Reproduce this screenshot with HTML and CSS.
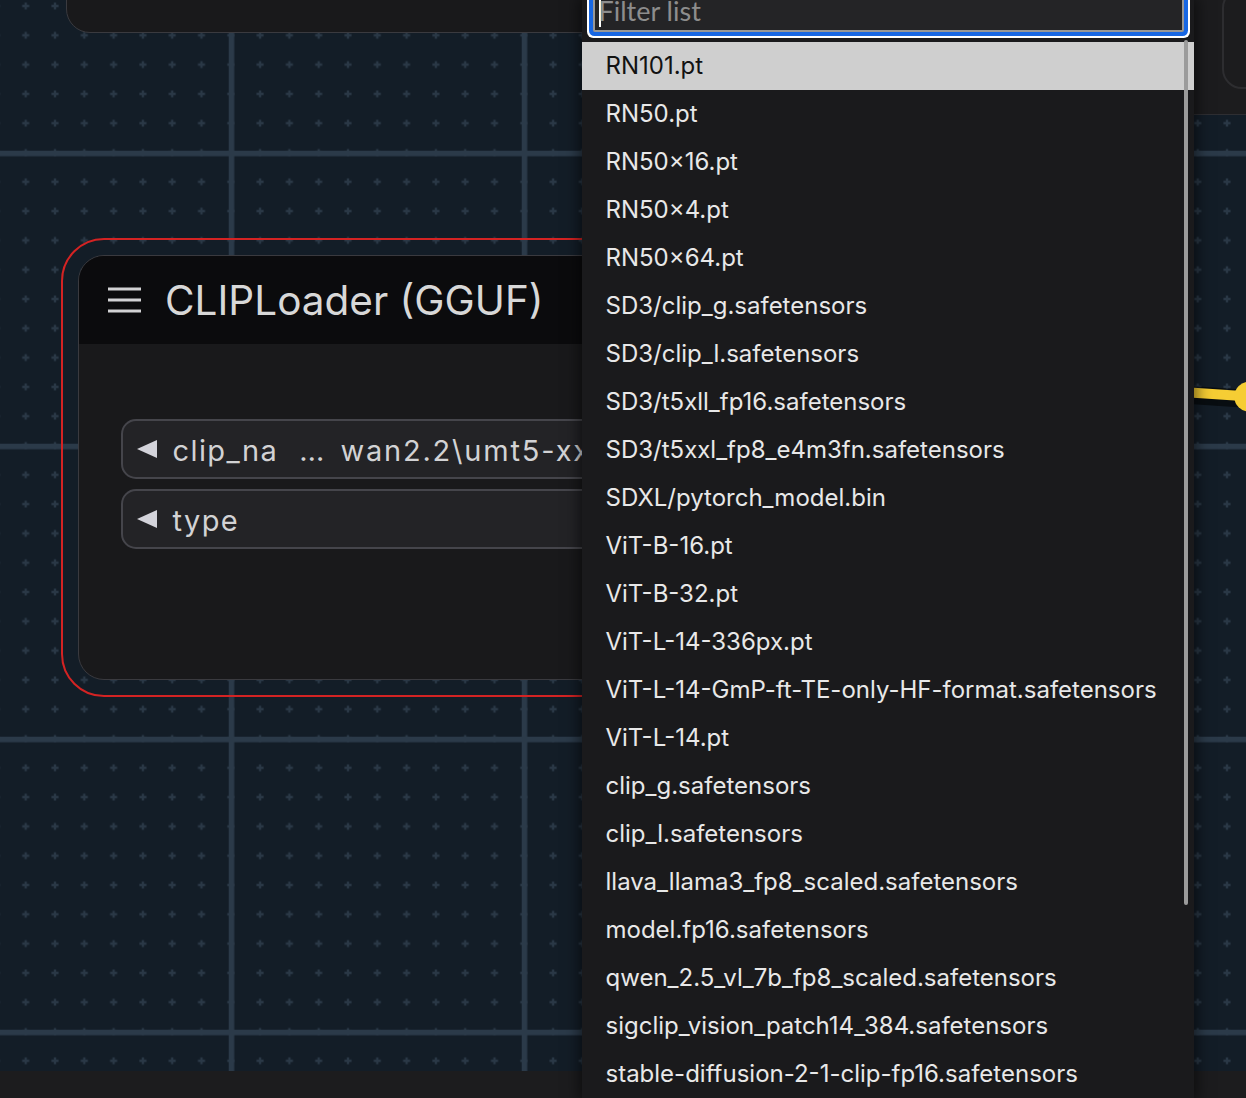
FILE: index.html
```html
<!DOCTYPE html>
<html lang="en">
<head>
<meta charset="utf-8">
<title>CLIPLoader (GGUF)</title>
<link rel="stylesheet" href="styles.css">
</head>
<body>
<div class="app">
  <div class="canvas">
    <svg class="grid" width="1246" height="1071" viewBox="0 0 1246 1071" aria-hidden="true">
      <defs>
        <pattern id="minor" patternUnits="userSpaceOnUse" width="29.3" height="29.3" x="216.15" y="137.85">
          <path d="M11.15 13.5h7v2.3h-7z M13.5 11.15h2.3v7h-2.3z" fill="#2a3846"/>
        </pattern>
        <pattern id="major" patternUnits="userSpaceOnUse" width="293" height="293" x="228.75" y="150.75">
          <rect x="0" y="0" width="5.5" height="293" fill="#2b3a49"/>
          <rect x="0" y="0" width="293" height="5.5" fill="#2b3a49"/>
        </pattern>
      </defs>
      <rect width="1246" height="1071" fill="#131d27"/>
      <rect width="1246" height="1071" fill="url(#minor)"/>
      <rect width="1246" height="1071" fill="url(#major)"/>
    </svg>

    <div class="node node-top"></div>

    <div class="node node-right">
      <div class="node-right-widget"></div>
    </div>

    <div class="node node-clip">
      <div class="node-title">
        <svg class="menu-icon" width="33" height="28" viewBox="0 0 33 28" aria-hidden="true">
          <rect x="0" y="1.5" width="33" height="3" fill="#d2d2d4"/>
          <rect x="0" y="12.5" width="33" height="3" fill="#d2d2d4"/>
          <rect x="0" y="23.5" width="33" height="3" fill="#d2d2d4"/>
        </svg>
        <span class="node-title-text">CLIPLoader (GGUF)</span>
      </div>
      <div class="node-body">
        <div class="widget">
          <svg class="arrow" width="20" height="18" viewBox="0 0 20 18" aria-hidden="true">
            <polygon points="0,9 20,0 20,18" fill="#d3d3da"/>
          </svg>
          <span class="w-label">clip_na</span>
          <span class="w-ellipsis">…</span>
          <span class="w-value">wan2.2\umt5-xxl_fp8_e4m3fn_scaled.safetensors</span>
        </div>
        <div class="widget">
          <svg class="arrow" width="20" height="18" viewBox="0 0 20 18" aria-hidden="true">
            <polygon points="0,9 20,0 20,18" fill="#d3d3da"/>
          </svg>
          <span class="w-label">type</span>
        </div>
      </div>
    </div>

    <svg class="link" width="110" height="70" viewBox="0 0 110 70" aria-hidden="true">
      <path d="M40 35 L92 38.5" stroke="#000" stroke-opacity="0.55" stroke-width="18" fill="none"/>
      <path d="M40 32.5 L92 36" stroke="#f6cd34" stroke-width="10" fill="none"/>
      <circle cx="99.3" cy="36.7" r="15" fill="#f6cd34"/>
    </svg>
  </div>

  <div class="statusbar"></div>

  <div class="dropdown">
    <div class="filter-row">
      <div class="filter"><span class="caret"></span><span class="placeholder">Filter list</span></div>
    </div>
    <div class="list">
      <div class="item active">RN101.pt</div>
      <div class="item">RN50.pt</div>
      <div class="item">RN50×16.pt</div>
      <div class="item">RN50×4.pt</div>
      <div class="item">RN50×64.pt</div>
      <div class="item">SD3/clip_g.safetensors</div>
      <div class="item">SD3/clip_l.safetensors</div>
      <div class="item">SD3/t5xll_fp16.safetensors</div>
      <div class="item">SD3/t5xxl_fp8_e4m3fn.safetensors</div>
      <div class="item">SDXL/pytorch_model.bin</div>
      <div class="item">ViT-B-16.pt</div>
      <div class="item">ViT-B-32.pt</div>
      <div class="item">ViT-L-14-336px.pt</div>
      <div class="item">ViT-L-14-GmP-ft-TE-only-HF-format.safetensors</div>
      <div class="item">ViT-L-14.pt</div>
      <div class="item">clip_g.safetensors</div>
      <div class="item">clip_l.safetensors</div>
      <div class="item">llava_llama3_fp8_scaled.safetensors</div>
      <div class="item">model.fp16.safetensors</div>
      <div class="item">qwen_2.5_vl_7b_fp8_scaled.safetensors</div>
      <div class="item">sigclip_vision_patch14_384.safetensors</div>
      <div class="item">stable-diffusion-2-1-clip-fp16.safetensors</div>
    </div>
    <div class="scroll-thumb"></div>
  </div>
</div>
</body>
</html>
```

FILE: styles.css
```css
html, body {
  margin: 0;
  padding: 0;
  background: #131d27;
}

body {
  width: 1246px;
  height: 1098px;
  overflow: hidden;
  font-family: Inter, "Noto Sans", sans-serif;
}

.app {
  position: relative;
  width: 1246px;
  height: 1098px;
  display: grid;
  grid-template-rows: 1071px 27px;
}

.canvas {
  position: relative;
  overflow: hidden;
  background: #131d27;
}

.grid {
  display: block;
}

/* ---------- nodes on the canvas ---------- */
.node {
  position: absolute;
  box-sizing: border-box;
  background: #19191b;
  border: 1.5px solid #3a3a3f;
}

.node-top {
  left: 66px;
  top: -100px;
  width: 700px;
  height: 133px;
  border-radius: 24px;
}

.node-right {
  left: 1100px;
  top: -100px;
  width: 220px;
  height: 215px;
  border-radius: 24px;
  background: #1c1c1e;
  border-color: #2e2e32;
}

.node-right-widget {
  box-sizing: border-box;
  margin-left: 121px;
  margin-top: 87px;
  width: 120px;
  height: 101px;
  border: 2px solid #2d2d30;
  border-radius: 20px;
}

.node-clip {
  left: 78px;
  top: 255px;
  width: 600px;
  height: 425px;
  border-radius: 26px;
  overflow: hidden;
  outline: 2.5px solid #d42323;
  outline-offset: 15px;
}

.node-title {
  height: 88px;
  background: #0b0b0d;
  display: flex;
  align-items: center;
  padding-left: 28.5px;
  gap: 24.5px;
}

.menu-icon {
  flex: none;
  display: block;
}

.node-title-text {
  font-size: 40.5px;
  color: #d8d8d8;
  white-space: nowrap;
  line-height: 1;
  margin-top: 3px;
}

.node-body {
  padding: 75px 0 0 42px;
  display: flex;
  flex-direction: column;
  gap: 10px;
}

.widget {
  box-sizing: border-box;
  height: 60px;
  width: 620px;
  background: #232326;
  border: 2px solid #45454b;
  border-radius: 15px;
  display: flex;
  align-items: center;
  padding-left: 14px;
  padding-top: 2px;
  font-size: 29px;
  color: #d2d2d4;
  white-space: nowrap;
  overflow: hidden;
}

.arrow {
  flex: none;
  display: block;
  margin-right: 15.5px;
  margin-top: -2px;
}

.w-label {
  letter-spacing: 1.4px;
}

.w-ellipsis {
  margin-left: 21px;
  letter-spacing: 0;
}

.w-value {
  margin-left: 16px;
  letter-spacing: 1.8px;
}

.link {
  position: absolute;
  left: 1150px;
  top: 360px;
}

/* ---------- bottom bar ---------- */
.statusbar {
  background: #1c1c1e;
}

/* ---------- dropdown menu ---------- */
.dropdown {
  position: absolute;
  left: 582px;
  top: 0;
  width: 612px;
  height: 1098px;
  background: #1a1a1c;
  box-shadow: 0 0 14px 3px rgba(0, 0, 0, 0.55);
  overflow: hidden;
}

.filter-row {
  display: flex;
  flex-direction: column;
  height: 42px;
  box-sizing: border-box;
  padding: 0 10px 0 10.5px;
}

.filter {
  flex: none;
  margin-top: -12px;
  height: 44px;
  box-sizing: border-box;
  border: 2px solid #979797;
  border-radius: 2px;
  background: #242426;
  box-shadow: 0 0 0 4px #1767e4, 0 0 0 6px #ffffff;
  padding: 1px 4px 0;
  font-family: Lato, "Open Sans", sans-serif;
  font-size: 27px;
  line-height: 39px;
  color: #8d8d8d;
  white-space: nowrap;
  overflow: hidden;
}

.caret {
  display: inline-block;
  width: 2px;
  height: 32px;
  background: #ffffff;
  vertical-align: -6px;
  margin-right: -2px;
}

.list {
  display: flex;
  flex-direction: column;
}

.item {
  height: 48px;
  box-sizing: border-box;
  padding-left: 23.5px;
  font-size: 24px;
  line-height: 48px;
  color: #e8e8e8;
  white-space: nowrap;
}

.item.active {
  background: #cfcfcf;
  color: #121212;
}

.scroll-thumb {
  position: absolute;
  left: 602px;
  top: 40px;
  width: 4px;
  height: 865px;
  background: #9b9b9b;
  border-radius: 2px;
}
```
